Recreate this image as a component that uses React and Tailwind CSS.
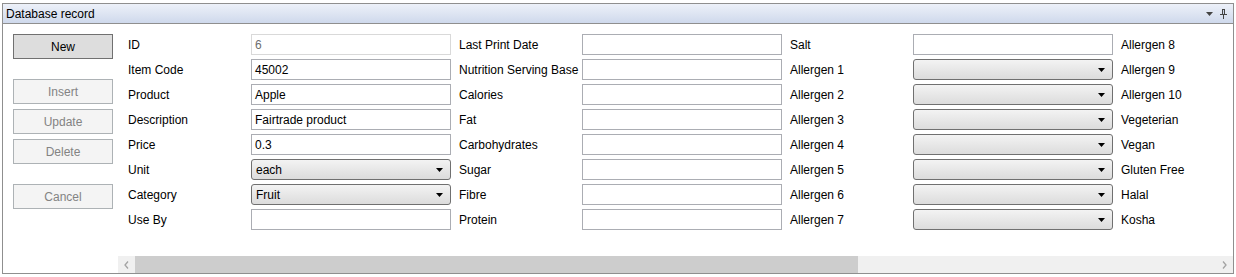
import React from 'react'

const font = { fontFamily: '"Liberation Sans", Arial, sans-serif' }

function Button({ children, primary }) {
  return (
    <button
      className={
        primary
          ? 'w-[100px] h-[25px] border border-[#707070] bg-[#dddddd] text-[12px] text-black'
          : 'w-[100px] h-[25px] border border-[#adb2b5] bg-[#f4f4f4] text-[12px] text-[#838383]'
      }
    >
      {children}
    </button>
  )
}

function Label({ children }) {
  return <div className="w-[123px] h-[21px] flex items-center text-[12px] text-black whitespace-nowrap">{children}</div>
}

function Input({ value, disabled }) {
  return (
    <div
      className={
        disabled
          ? 'w-[200px] h-[21px] border border-[#d9d9d9] bg-white px-[3px] flex items-center text-[12px] text-[#6d6d6d]'
          : 'w-[200px] h-[21px] border border-[#abadb3] bg-white px-[3px] flex items-center text-[12px] text-black'
      }
    >
      {value}
    </div>
  )
}

function Combo({ value }) {
  return (
    <div className="w-[200px] h-[21px] border border-[#707070] rounded-[3px] bg-gradient-to-b from-[#f3f3f3] to-[#dcdcdc] pl-[4px] pr-[7px] flex items-center justify-between text-[12px] text-black">
      <span>{value}</span>
      <svg width="7" height="4" viewBox="0 0 7 4"><path d="M0 0h7L3.5 4z" fill="#000" /></svg>
    </div>
  )
}

const rows = [
  [['ID', 'input', '6', true], ['Last Print Date', 'input'], ['Salt', 'input'], ['Allergen 8']],
  [['Item Code', 'input', '45002'], ['Nutrition Serving Base', 'input'], ['Allergen 1', 'combo'], ['Allergen 9']],
  [['Product', 'input', 'Apple'], ['Calories', 'input'], ['Allergen 2', 'combo'], ['Allergen 10']],
  [['Description', 'input', 'Fairtrade product'], ['Fat', 'input'], ['Allergen 3', 'combo'], ['Vegeterian']],
  [['Price', 'input', '0.3'], ['Carbohydrates', 'input'], ['Allergen 4', 'combo'], ['Vegan']],
  [['Unit', 'combo', 'each'], ['Sugar', 'input'], ['Allergen 5', 'combo'], ['Gluten Free']],
  [['Category', 'combo', 'Fruit'], ['Fibre', 'input'], ['Allergen 6', 'combo'], ['Halal']],
  [['Use By', 'input'], ['Protein', 'input'], ['Allergen 7', 'combo'], ['Kosha']],
]

export default function App() {
  return (
    <div className="w-[1236px] h-[277px] bg-white pl-[2px] pt-[3px]" style={font}>
      <div className="w-[1232px] h-[271px] border border-[#8f8f8f] flex flex-col">
        <div className="h-[20px] shrink-0 border-b border-[#8f8f8f] bg-gradient-to-b from-[#edf1f9] to-[#cfd9ec] flex items-center justify-between pl-[3px] pr-[6px]">
          <span className="text-[12px] text-black">Database record</span>
          <div className="flex items-center gap-[7px]">
            <svg width="7" height="4" viewBox="0 0 7 4"><path d="M0 0h7L3.5 4z" fill="#444" /></svg>
            <svg width="7" height="10" viewBox="0 0 7 10">
              <path d="M2 0h3v5h2v1H4v4H3V6H0V5h2z" fill="#444" />
              <path d="M3 1h1v4H3z" fill="#cfd9ec" />
            </svg>
          </div>
        </div>
        <div className="flex-1 flex min-h-0">
          <div className="w-[115px] shrink-0 pl-[10px] pt-[10px] flex flex-col">
            <Button primary>New</Button>
            <div className="h-[20px]" />
            <div className="flex flex-col gap-[5px]">
              <Button>Insert</Button>
              <Button>Update</Button>
              <Button>Delete</Button>
            </div>
            <div className="h-[20px]" />
            <Button>Cancel</Button>
          </div>
          <div className="flex-1 flex flex-col min-w-0">
            <div className="flex-1 pl-[10px] pt-[10px] flex flex-col gap-[4px]">
              {rows.map((row, i) => (
                <div key={i} className="flex gap-[8px]">
                  {row.map(([label, kind, value, disabled], j) => (
                    <div key={j} className="flex">
                      <Label>{label}</Label>
                      {kind === 'input' && <Input value={value} disabled={disabled} />}
                      {kind === 'combo' && <Combo value={value} />}
                    </div>
                  ))}
                </div>
              ))}
            </div>
            <div className="h-[17px] shrink-0 bg-[#f0f0f0] flex items-center">
              <div className="w-[17px] h-full flex items-center justify-center">
                <svg width="5" height="8" viewBox="0 0 5 8"><path d="M4 0.5L1 4l3 3.5" stroke="#a3a3a3" strokeWidth="1.3" fill="none" /></svg>
              </div>
              <div className="w-[723px] h-full bg-[#cdcdcd]" />
              <div className="flex-1" />
              <div className="w-[17px] h-full flex items-center justify-center">
                <svg width="5" height="8" viewBox="0 0 5 8"><path d="M1 0.5L4 4 1 7.5" stroke="#a3a3a3" strokeWidth="1.3" fill="none" /></svg>
              </div>
            </div>
          </div>
        </div>
      </div>
    </div>
  )
}
